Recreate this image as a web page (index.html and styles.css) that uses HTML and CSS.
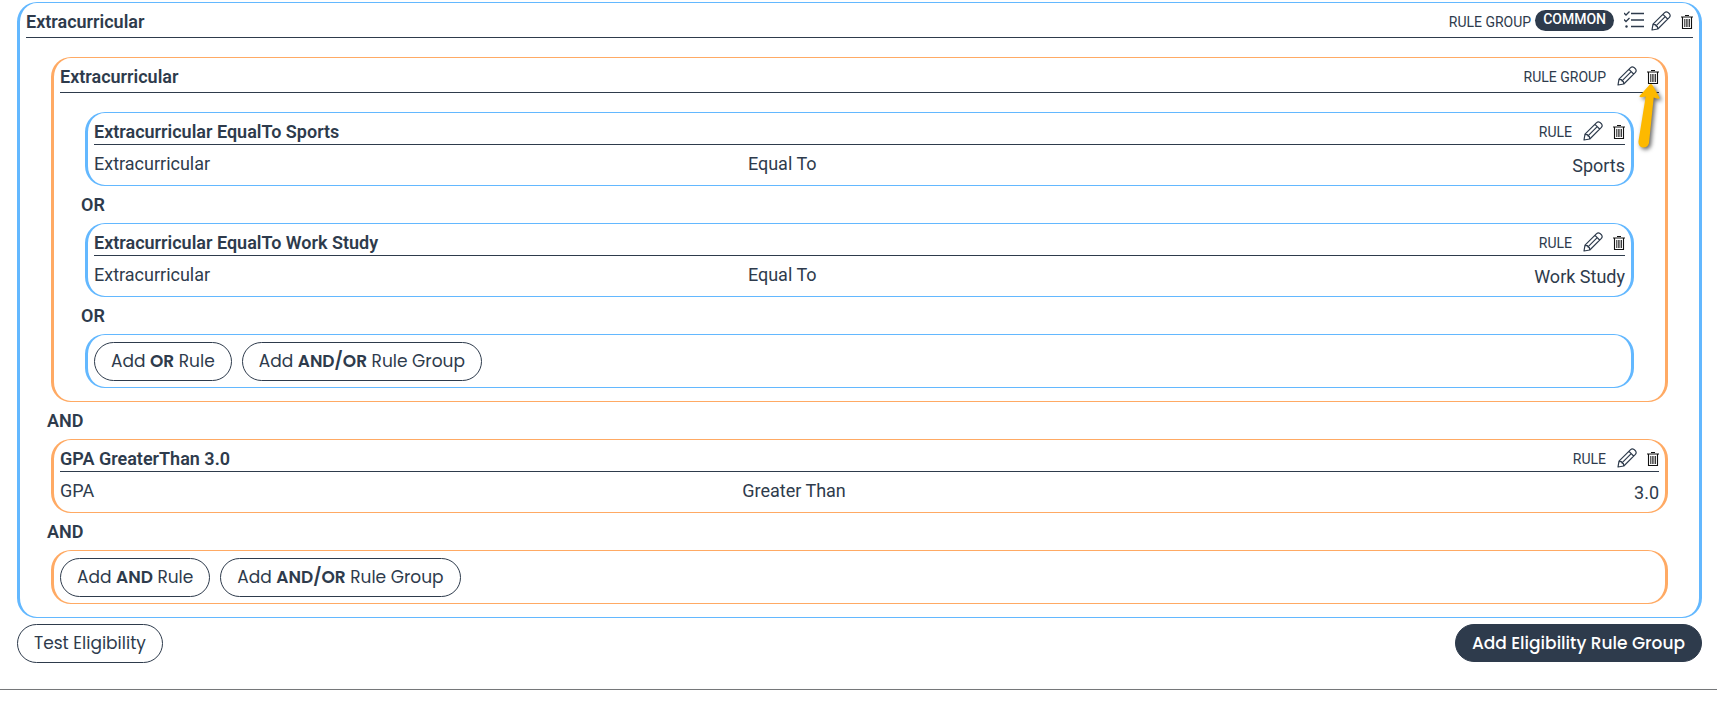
FILE: index.html
```html
<!DOCTYPE html>
<html lang="en">
<head>
<meta charset="utf-8">
<meta name="viewport" content="width=device-width, initial-scale=1">
<title>Eligibility Rules</title>
<link rel="stylesheet" href="styles.css">
</head>
<body>
<svg class="sprite" aria-hidden="true">
  <symbol id="pencil" viewBox="0 0 20 20">
    <path d="M1 19 L2 13.2 L13.6 1.6 Q15.2 0.2 17 1.4 L18.6 3 Q19.8 4.8 18.4 6.4 L6.8 18 Z M12 3.4 L16.6 8 M14.2 5.6 L5 14.8 M2.2 13.4 L4.4 13.6 L5 15 L6.4 15.6 L6.6 17.8" fill="none" stroke="currentColor" stroke-width="1.2" stroke-linejoin="round"/>
  </symbol>
  <symbol id="trash" viewBox="0 0 12 14">
    <path d="M4 .5h4M0 2h12M1.500 2v11.500h9V2" fill="none" stroke="#111" stroke-width="1.1"/>
    <path d="M3.700 4v8M5.300 4v8M6.900 4v8M8.500 4v8" fill="none" stroke="#222" stroke-width=".9"/>
  </symbol>
  <symbol id="checks" viewBox="0 0 20 17">
    <path d="M7 2.5h13M7 9h13M7 15.5h13M0 2l2 2 3.5-3.5M0 8.5l2 2L5.500 7" fill="none" stroke="currentColor" stroke-width="1.3"/>
    <circle cx="2.500" cy="15.500" r="1.200" fill="currentColor"/>
  </symbol>
</svg>

<main class="page">
  <section class="box blue group">
    <header class="head">
      <h2 class="title">Extracurricular</h2>
      <div class="tools">
        <span class="kind">RULE GROUP</span>
        <span class="badge">COMMON</span>
        <button class="icon checks" type="button" aria-label="Criteria list"><svg><use href="#checks"/></svg></button>
        <button class="icon pencil" type="button" aria-label="Edit"><svg><use href="#pencil"/></svg></button>
        <button class="icon trash" type="button" aria-label="Delete"><svg><use href="#trash"/></svg></button>
      </div>
    </header>
    <div class="children">
      <section class="box orange group">
        <header class="head">
          <h3 class="title">Extracurricular</h3>
          <div class="tools">
            <span class="kind">RULE GROUP</span>
            <button class="icon pencil" type="button" aria-label="Edit"><svg><use href="#pencil"/></svg></button>
            <button class="icon trash" type="button" aria-label="Delete"><svg><use href="#trash"/></svg></button>
            <svg class="pointer" viewBox="0 0 28 68" aria-hidden="true"><path d="M14 1 Q12.500 1 11.500 3 L2.500 13 Q2 15 8.700 13.500 L1.500 58 Q1 64 6 64.500 Q11 64.500 12 60 L16.700 14.500 Q23.500 17 22.500 14.500 L16 3 Q15 1 14 1 Z" fill="#fdb900"/></svg>
          </div>
        </header>
        <div class="children">
          <article class="box blue rule">
            <header class="head">
              <h4 class="title">Extracurricular EqualTo Sports</h4>
              <div class="tools">
                <span class="kind">RULE</span>
                <button class="icon pencil" type="button" aria-label="Edit"><svg><use href="#pencil"/></svg></button>
                <button class="icon trash" type="button" aria-label="Delete"><svg><use href="#trash"/></svg></button>
              </div>
            </header>
            <div class="terms"><span>Extracurricular</span><span class="operator">Equal To</span><span class="value">Sports</span></div>
          </article>
          <div class="joiner">OR</div>
          <article class="box blue rule">
            <header class="head">
              <h4 class="title">Extracurricular EqualTo Work Study</h4>
              <div class="tools">
                <span class="kind">RULE</span>
                <button class="icon pencil" type="button" aria-label="Edit"><svg><use href="#pencil"/></svg></button>
                <button class="icon trash" type="button" aria-label="Delete"><svg><use href="#trash"/></svg></button>
              </div>
            </header>
            <div class="terms"><span>Extracurricular</span><span class="operator">Equal To</span><span class="value">Work Study</span></div>
          </article>
          <div class="joiner">OR</div>
          <div class="box blue actions">
            <button class="btn" type="button">Add <b>OR</b> Rule</button>
            <button class="btn" type="button">Add <b>AND/OR</b> Rule Group</button>
          </div>
        </div>
      </section>
      <div class="joiner">AND</div>
      <article class="box orange rule">
        <header class="head">
          <h3 class="title">GPA GreaterThan 3.0</h3>
          <div class="tools">
            <span class="kind">RULE</span>
            <button class="icon pencil" type="button" aria-label="Edit"><svg><use href="#pencil"/></svg></button>
            <button class="icon trash" type="button" aria-label="Delete"><svg><use href="#trash"/></svg></button>
          </div>
        </header>
        <div class="terms"><span>GPA</span><span class="operator">Greater Than</span><span class="value">3.0</span></div>
      </article>
      <div class="joiner">AND</div>
      <div class="box orange actions">
        <button class="btn" type="button">Add <b>AND</b> Rule</button>
        <button class="btn" type="button">Add <b>AND/OR</b> Rule Group</button>
      </div>
    </div>
  </section>
  <div class="footer">
    <button class="btn" type="button">Test Eligibility</button>
    <button class="btn primary" type="button">Add Eligibility Rule Group</button>
  </div>
</main>
<hr class="divider">
</body>
</html>
```
FILE: styles.css
```css
* { box-sizing: border-box; }

body {
  margin: 0;
  background: #fff;
  color: #2e3b4c;
  font: 18px/26px Roboto, "Liberation Sans", sans-serif;
}

.sprite { position: absolute; width: 0; height: 0; }

.page { padding: 2px 15px 26px 17px; }

.box {
  border: solid;
  border-width: 1px 3px;
  border-radius: 20px;
}
.blue { border-color: #63b8ff; }
.orange { border-color: #ffaa64; }

.head {
  display: flex;
  justify-content: space-between;
  margin: 0 6px;
  padding-top: 6px;
  border-bottom: 1px solid #2e3b4c;
}
.group > .head { padding-bottom: 3px; }

.title { margin: 0; font-size: 18px; font-weight: 600; line-height: 25px; }

.tools {
  position: relative;
  display: flex;
  align-items: center;
  height: 25px;
}
.kind { padding-top: 1px; font-size: 14px; }
.badge {
  height: 21px;
  margin: 0 10px 2px 4px;
  padding: 0 8px;
  border-radius: 11px;
  background: #2e3b4c;
  color: #fff;
  font-size: 14px;
  font-weight: 500;
  line-height: 19px;
}

.icon {
  display: block;
  padding: 0;
  border: 0;
  background: none;
  color: #2e3b4c;
  cursor: pointer;
}
.icon svg { display: block; width: 100%; height: 100%; }
.checks { width: 20px; height: 17px; margin-bottom: 5px; }
.pencil { width: 20px; height: 20px; margin: 0 0 1px 11px; }
.checks + .pencil { margin-left: 7px; }
.trash { width: 12px; height: 14px; margin-left: 10px; }

.pointer {
  position: absolute;
  top: 19px;
  right: -6px;
  width: 28px;
  height: 68px;
  overflow: visible;
  filter: drop-shadow(2px 2px 2px rgba(0, 0, 0, .6));
  pointer-events: none;
}

.children { padding: 19px 31px 13px; }

.joiner {
  margin-left: -4px;
  font-weight: 600;
  line-height: 37px;
}

.terms {
  display: grid;
  grid-template-columns: 5fr 4fr 3fr;
  margin: 0 6px;
  padding: 6px 0 8px;
}
.operator { padding-left: 16px; }
.value { margin-bottom: -2px; padding-top: 2px; text-align: right; }

.actions {
  display: flex;
  flex-wrap: wrap;
  gap: 10px;
  padding: 7px 6px 6px;
}

.btn {
  padding: 5px 16px;
  border: 1px solid #2e3b4c;
  border-radius: 20px;
  background: #fff;
  color: #2e3b4c;
  font: 17px/27px Poppins, Inter, "Open Sans", sans-serif;
  cursor: pointer;
}
.btn b { font-weight: 600; }

.footer {
  display: flex;
  flex-wrap: wrap;
  align-items: flex-start;
  justify-content: space-between;
  margin-top: 6px;
}
.primary {
  background: #2e3b4c;
  color: #fff;
  font-weight: 500;
  line-height: 26px;
}

.divider {
  margin: 0;
  border: 0;
  border-top: 1px solid #757779;
  box-shadow: 0 1px 3px rgba(0, 0, 0, .1);
}
```
